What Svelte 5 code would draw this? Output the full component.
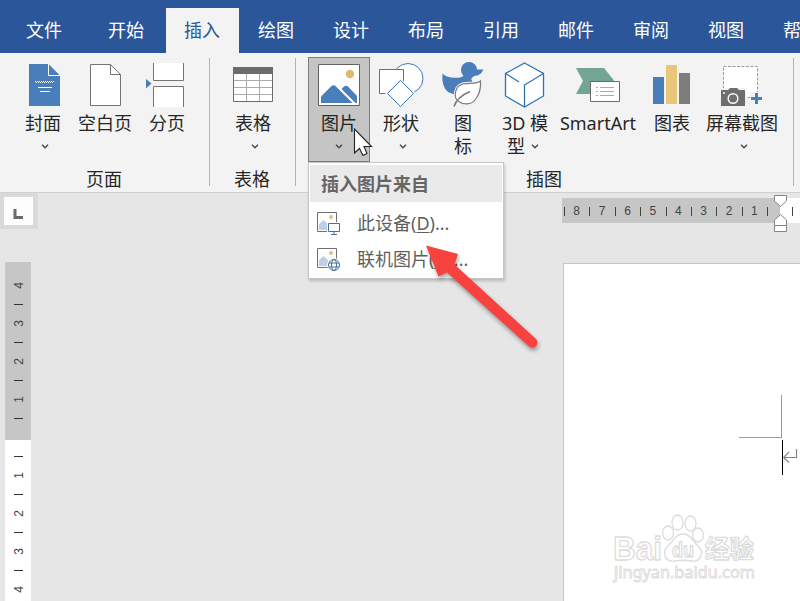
<script lang="ts">
  type Command = {
    icon: string;
    lines: string[];
    width: number;
    chevron?: boolean;
    open?: boolean;
  };
  type Group = { label: string; width: number; commands: Command[] };

  const tabs = ['文件', '开始', '插入', '绘图', '设计', '布局', '引用', '邮件', '审阅', '视图', '帮助'];
  let active = $state('插入');
  let menuOpen = $state(true);

  const groups: Group[] = [
    {
      label: '页面',
      width: 210,
      commands: [
        { icon: 'cover', lines: ['封面', ''], width: 62, chevron: true },
        { icon: 'blank', lines: ['空白页'], width: 62 },
        { icon: 'break', lines: ['分页'], width: 62 },
      ],
    },
    {
      label: '表格',
      width: 86,
      commands: [{ icon: 'table', lines: ['表格', ''], width: 62, chevron: true }],
    },
    {
      label: '插图',
      width: 498,
      commands: [
        { icon: 'picture', lines: ['图片', ''], width: 62, chevron: true, open: true },
        { icon: 'shapes', lines: ['形状', ''], width: 62, chevron: true },
        { icon: 'icons', lines: ['图', '标'], width: 62 },
        { icon: 'cube', lines: ['3D 模', '型'], width: 62, chevron: true },
        { icon: 'smartart', lines: ['SmartArt'], width: 84 },
        { icon: 'chart', lines: ['图表'], width: 64 },
        { icon: 'screenshot', lines: ['屏幕截图', ''], width: 76, chevron: true },
      ],
    },
  ];

  const sources = [
    { icon: 'device', text: '此设备', key: 'D' },
    { icon: 'online', text: '联机图片', key: 'O' },
  ];

  const hMarks = [8, 7, 6, 5, 4, 3, 2, 1];
  const vMargin = [4, 3, 2, 1];
  const vBody = [1, 2, 3, 4];
</script>

{#snippet commandIcon(name: string)}
  <svg class="icon" width="60" height="54" viewBox="0 0 60 54" fill="none">
    {#if name === 'cover'}
      <path d="M16 6H35.500L47 17.500V48H16Z" fill="#4a7ebb" />
      <path d="M35.500 6V17.500H47" stroke="#fff" />
      <path d="M22 23.500H41" stroke="#fff" stroke-dasharray="1 1" />
      <path d="M23 24.500H41" stroke="#fff" stroke-dasharray="1 1" />
      <path d="M25 29.500H39M27 33.500H37" stroke="#fff" />
    {:else if name === 'blank'}
      <path d="M15.500 6.500H35.500L45.500 16.500V47.500H15.500Z" fill="#fff" stroke="#747474" />
      <path d="M35.500 6.500V16.500H45.500" stroke="#747474" />
    {:else if name === 'break'}
      <path d="M16.500 5V22.500H46.500V5" fill="#fff" stroke="#747474" />
      <path d="M16.500 49V28.500H46.500V49" fill="#fff" stroke="#747474" />
      <path d="M9 21L14.500 25.500L9 30.500Z" fill="#4a7ebb" />
    {:else if name === 'table'}
      <path d="M10.500 9.500H49.500V43.500H10.500Z" fill="#fff" />
      <path d="M23.500 16V43M36.500 16V43M11 22.500H49M11 29.500H49M11 36.500H49" stroke="#ababab" />
      <path d="M10.500 9.500H49.500V43.500H10.500Z" stroke="#6b6b6b" />
      <path d="M10 9H50V16H10Z" fill="#6b6b6b" />
    {:else if name === 'picture'}
      <path d="M9.500 6.500H50.500V47.500H9.500Z" fill="#fff" stroke="#626262" />
      <circle cx="41" cy="16" r="4.200" fill="#e0b870" />
      <path d="M12 45V38.500L22.500 28Q24.500 26.500 26.500 28L43.500 45Z" fill="#4a7ebb" />
      <path d="M32.500 31L35 28.500Q37 27 39 28.500L48 38V45H46.500Z" fill="#4a7ebb" />
    {:else if name === 'shapes'}
      <circle cx="37" cy="20.500" r="15" fill="#fff" stroke="#4278b0" />
      <path d="M8.500 11.500H32.500V35.500H8.500Z" fill="#fff" stroke="#4278b0" />
      <path d="M29.500 20L45 35.500L29.500 51L14 35.500Z" fill="#f3f3f3" />
      <path d="M29.500 22.500L42.500 35.500L29.500 48.500L16.500 35.500Z" fill="#fff" stroke="#4278b0" />
    {:else if name === 'icons'}
      <circle cx="36" cy="12" r="8" fill="#4a7ebb" />
      <path
        d="M42 11.500H50.500Q48 17.500 41 18Q37 20 39 23Q42 33 33 36Q22 38 15 34Q8 28 9.500 15.500Q15 21 27 19.500Q32 18 31 15Z"
        fill="#4a7ebb"
      />
      <path
        d="M47.500 23C42 28 29 22 24 30C21 36 22 41 25 43C30 47 38 47 42 42C47 36 48 30 47.500 23Z"
        fill="#fff"
        stroke="#f3f3f3"
        stroke-width="3"
      />
      <path
        d="M47.500 23C42 28 29 22 24 30C21 36 22 41 25 43C30 47 38 47 42 42C47 36 48 30 47.500 23Z"
        fill="#fff"
        stroke="#7b7b7b"
        stroke-width="1.200"
      />
      <path d="M21 48.500Q24 39 37 33.500" stroke="#7b7b7b" stroke-width="1.600" />
    {:else if name === 'cube'}
      <path
        d="M29.500 5L48.500 15.500V38L29.500 49L10.500 38V15.500Z"
        fill="#fff"
        stroke="#2e75b6"
        stroke-width="1.300"
      />
      <path d="M10.500 15.500L24 24M48.500 15.500L29.500 27V49" stroke="#2e75b6" stroke-width="1.300" />
    {:else if name === 'smartart'}
      <path d="M8 10H36L46 22.500L36 36H8L15 23Z" fill="#72a594" />
      <path d="M22.500 23.500H51.500V43.500H22.500Z" fill="#fff" stroke="#6b6b6b" />
      <path d="M28 29.500H30M28 33.500H30M28 37.500H30M32 29.500H46M32 33.500H46M32 37.500H46" stroke="#ababab" />
    {:else if name === 'chart'}
      <path d="M11 19H22V46H11Z" fill="#4a7ebb" />
      <path d="M24 7H35V46H24Z" fill="#e8c67a" />
      <path d="M37 15H48V46H37Z" fill="#7d7d7d" />
    {:else if name === 'screenshot'}
      <path d="M11.500 8.500H45.500V39.500H11.500Z" fill="#fff" stroke="#9a9a9a" stroke-dasharray="3 1.500" />
      <path d="M8 30H34V49H8ZM38 34H52V48H38Z" fill="#f3f3f3" />
      <path d="M9 33Q9 32 10 32H16L18 30H25L27 32H32Q33 32 33 33V48H9Z" fill="#6e6e6e" />
      <circle cx="21" cy="40.500" r="4.800" stroke="#fff" stroke-width="1.500" />
      <path d="M11 35H13" stroke="#fff" stroke-width="1.500" />
      <path d="M39 40.500H50M44.500 35V46" stroke="#4a7ebb" stroke-width="3" />
    {/if}
  </svg>
{/snippet}

<div class="window">
  <nav class="tabs">
    {#each tabs as tab, i}
      <button class="tab" class:file={i === 0} class:active={tab === active} onclick={() => (active = tab)}>
        {tab}
      </button>
    {/each}
  </nav>

  <div class="ribbon">
    {#each groups as group}
      <section class="group" style:width="{group.width}px">
        <div class="commands">
          {#each group.commands as cmd}
            <div class="slot">
              <button
                class="command"
                class:open={cmd.open && menuOpen}
                style:width="{cmd.width}px"
                onclick={() => cmd.open && (menuOpen = !menuOpen)}
              >
                {@render commandIcon(cmd.icon)}
                {#each cmd.lines as line, i}
                  <span class="line">
                    {line}
                    {#if cmd.chevron && i === cmd.lines.length - 1}
                      <svg class="chevron" class:inline={line} width="8" height="5" viewBox="0 0 8 5">
                        <path d="M1 0.800L4 3.800L7 0.800" fill="none" stroke="#444" stroke-width="1.300" />
                      </svg>
                    {/if}
                  </span>
                {/each}
              </button>

              {#if cmd.open && menuOpen}
                <div class="menu">
                  <div class="menu-title">插入图片来自</div>
                  {#each sources as source}
                    <div class="menu-item">
                      <svg width="25" height="25" viewBox="0 0 25 25" fill="none">
                        <path d="M1.500 1.500H20.500V20.500H1.500Z" fill="#fff" stroke="#6e6e6e" />
                        <path d="M3 19V13L7.500 9L12 13V19Z" fill="#bfd0e4" />
                        <circle cx="15" cy="6" r="2" fill="#e3bf7e" />
                        {#if source.icon === 'device'}
                          <path d="M11 11H25V25H11Z" fill="#fff" />
                          <path d="M12.500 12.500H23.500V20.500H12.500ZM18 20.500V23M15 23.500H21" stroke="#41719c" />
                        {:else}
                          <circle cx="18" cy="18" r="7" fill="#fff" />
                          <circle cx="18" cy="18" r="5.500" stroke="#41719c" />
                          <ellipse cx="18" cy="18" rx="2.500" ry="5.500" stroke="#41719c" />
                          <path d="M13 16H23M13 20H23" stroke="#41719c" />
                        {/if}
                      </svg>
                      <span>{source.text}(<u>{source.key}</u>)...</span>
                    </div>
                  {/each}
                </div>
              {/if}
            </div>
          {/each}
        </div>
        <div class="group-label">{group.label}</div>
      </section>
    {/each}
  </div>

  <div class="workspace">
    <aside class="side">
      <div class="tab-stop">
        <svg width="29" height="28" viewBox="0 0 29 28">
          <path d="M11 12V20.500H19" fill="none" stroke="#6a6a6a" stroke-width="3" />
        </svg>
      </div>
      <div class="v-ruler">
        <div class="v-margin">
          {#each vMargin as n}
            <span class="v-num">{n}</span>
            <i class="v-tick"></i>
          {/each}
        </div>
        <div class="v-body">
          {#each vBody as n}
            <i class="v-tick"></i>
            <span class="v-num">{n}</span>
          {/each}
        </div>
      </div>
    </aside>

    <main class="canvas">
      <div class="h-ruler">
        <div class="h-margin">
          {#each hMarks as n}
            <span class="h-cell">{n}</span>
          {/each}
          <span class="h-cell"></span>
        </div>
        <div class="h-body"><span class="h-cell"></span></div>
        <svg class="indent" width="14" height="38" viewBox="0 0 14 38">
          <path
            d="M0.500 0.500H12.500V6L6.500 11.500L0.500 6ZM6.500 19.500L12.500 25V36.500H0.500V25ZM0.500 30.500H12.500"
            fill="#fff"
            stroke="#858585"
          />
        </svg>
      </div>
      <div class="page">
        <div class="corner"></div>
        <div class="paragraph">
          <i class="caret"></i>
          <svg width="15" height="14" viewBox="0 0 15 14" fill="none" stroke="#858585">
            <path d="M13.500 0V8.500H1M6 3L0.500 8.500L6 13.500" stroke-width="1.200" />
          </svg>
        </div>
      </div>
    </main>
  </div>

  <svg class="pointer" width="20" height="30" viewBox="0 0 20 30">
    <path
      d="M1.500 1V25L6.500 20.500L10 27.500L14 25.500L11 18.500H18.500Z"
      fill="#fff"
      stroke="#222"
      stroke-width="1.100"
    />
  </svg>

  <svg class="arrow" width="130" height="120" viewBox="0 0 130 120">
    <path
      d="M6 5.500L38 14L34.500 24.500L115.500 98.500A5 5 0 0 1 109 106.500L27 32.500L18.500 36.500Z"
      fill="#f8423f"
    />
  </svg>

  <svg class="watermark" width="150" height="72" viewBox="0 0 150 72">
    <g fill="#fff" stroke="#dcdcdc" stroke-width="1.300" stroke-linejoin="round">
      <text x="3" y="47.500" font-size="34" font-weight="700" textLength="49" lengthAdjust="spacingAndGlyphs">Bai</text>
      <path d="M57 35C63 30 65 22 73 22C81 22 83 30 89 35C94 41 91 50 82 49C76 48 70 48 64 49C55 50 52 41 57 35Z" />
      <ellipse cx="58" cy="21" rx="5.500" ry="7" />
      <ellipse cx="67.500" cy="10.500" rx="5.500" ry="7.500" />
      <ellipse cx="80.500" cy="11.500" rx="5.500" ry="7.500" />
      <ellipse cx="88" cy="23" rx="5.500" ry="7" />
      <text x="62" y="45" font-size="21" font-weight="700" textLength="22" lengthAdjust="spacingAndGlyphs">du</text>
      <text x="95" y="46" font-size="25" font-weight="700" textLength="49" lengthAdjust="spacingAndGlyphs">经验</text>
    </g>
    <text
      class="site"
      x="4"
      y="66"
      font-size="16"
      fill="#fff"
      stroke="#dcdcdc"
      stroke-width="0.900"
      textLength="141"
      lengthAdjust="spacingAndGlyphs">jingyan.baidu.com</text
    >
  </svg>
</div>

<style>
  .window {
    position: relative;
    display: flex;
    flex-direction: column;
    width: 800px;
    height: 601px;
    overflow: hidden;
    background: #e6e6e6;
    color: #262626;
    font-family: 'Noto Sans', 'Noto Sans CJK SC', sans-serif;
    font-size: 18px;
  }
  button {
    box-sizing: border-box;
    border: 0;
    padding: 0;
    background: none;
    color: inherit;
    font: inherit;
  }
  .tabs {
    display: flex;
    flex: none;
    align-items: flex-end;
    height: 53px;
    background: #2b579a;
    color: #fff;
  }
  .tab {
    flex: none;
    width: 73px;
    height: 45px;
    margin: 0 1px;
    padding: 0 1px 2px 0;
    line-height: 42px;
  }
  .tab.file {
    width: 87px;
  }
  .tab.active {
    margin: 0 0 0 2px;
    background: #f3f3f3;
    color: #2b579a;
  }
  .ribbon {
    display: flex;
    flex: none;
    box-sizing: border-box;
    height: 140px;
    padding-top: 4px;
    border-bottom: 1px solid #d0d0d0;
    background: #f3f3f3;
  }
  .group {
    position: relative;
    flex: none;
    display: flex;
    flex-direction: column;
  }
  .group::after {
    content: '';
    position: absolute;
    top: 1px;
    right: 0;
    width: 1px;
    height: 128px;
    background: #b4b4b4;
  }
  .commands {
    display: flex;
    height: 105px;
    padding-left: 12px;
  }
  .slot {
    position: relative;
  }
  .command {
    display: flex;
    flex-direction: column;
    align-items: center;
    height: 105px;
    border: 1px solid transparent;
  }
  .command.open {
    background: #c5c5c5;
    border-color: #7e7e7e;
  }
  .icon {
    flex: none;
    display: block;
  }
  .line {
    display: flex;
    align-items: center;
    justify-content: center;
    height: 23px;
    line-height: 23px;
    white-space: nowrap;
  }
  .chevron {
    margin-left: 3px;
  }
  .open .chevron {
    margin-left: 0;
  }
  .chevron.inline {
    margin: 0 4px 0 6px;
  }
  .group-label {
    padding-right: 2px;
    line-height: 34px;
    text-align: center;
  }
  .menu {
    position: absolute;
    z-index: 2;
    top: 105px;
    left: 0;
    box-sizing: border-box;
    width: 196px;
    height: 117px;
    padding: 2px 1px 0;
    border: 1px solid #c6c6c6;
    background: #fff;
    box-shadow: 1px 2px 3px rgba(0, 0, 0, 0.2);
    color: #5f5f5f;
  }
  .menu-title {
    height: 37px;
    margin-bottom: 3px;
    padding-left: 11px;
    background: #eaeaea;
    color: #666;
    font-weight: 700;
    line-height: 38px;
  }
  .menu-item {
    display: flex;
    align-items: center;
    gap: 16px;
    height: 36px;
    padding-left: 6px;
    line-height: 36px;
    white-space: nowrap;
  }
  .menu-item u {
    text-decoration-thickness: 1px;
    text-underline-offset: 2px;
  }
  .workspace {
    display: flex;
    flex: 1;
    min-height: 0;
  }
  .side {
    width: 562px;
    flex: none;
  }
  .tab-stop {
    width: 29px;
    height: 28px;
    border: 4px solid #dadada;
    border-right-width: 5px;
    background: #fdfdfd;
  }
  .v-ruler {
    width: 26px;
    margin: 33px 0 0 5px;
    color: #444;
    font-family: 'Liberation Sans', sans-serif;
    font-size: 12px;
  }
  .v-margin,
  .v-body {
    display: flex;
    flex-direction: column;
    align-items: center;
    box-sizing: border-box;
  }
  .v-margin {
    height: 178px;
    padding-top: 14px;
    background: #c6c6c6;
  }
  .v-body {
    height: 161px;
    padding-top: 7px;
    background: #fff;
  }
  .v-num,
  .v-tick {
    flex: none;
    display: flex;
    align-items: center;
    justify-content: center;
    width: 19px;
    height: 19px;
  }
  .v-num {
    transform: rotate(-90deg);
  }
  .v-tick::before {
    content: '';
    width: 9px;
    height: 1px;
    background: #333;
  }
  .canvas {
    display: flex;
    flex-direction: column;
    width: 238px;
  }
  .h-ruler {
    position: relative;
    flex: none;
    display: flex;
    height: 25px;
    margin-top: 5px;
    color: #444;
    font-family: 'Liberation Sans', sans-serif;
    font-size: 12px;
  }
  .h-margin,
  .h-body {
    display: flex;
    align-items: center;
    box-sizing: border-box;
    overflow: hidden;
  }
  .h-margin {
    width: 218px;
    padding: 1px 0 0 2px;
    background: #c6c6c6;
  }
  .h-body {
    flex: 1;
    padding: 1px 0 0 12px;
    background: #fff;
  }
  .h-cell {
    flex: none;
    box-sizing: border-box;
    width: 25.4px;
    height: 9px;
    border-left: 1px solid #444;
    padding-right: 1px;
    line-height: 9px;
    text-align: center;
  }
  .indent {
    position: absolute;
    top: -3px;
    left: 212px;
  }
  .page {
    flex: 1;
    margin: 40px 0 0 1px;
    border: 1px solid #c6c6c6;
    border-width: 1px 0 0 1px;
    background: #fff;
  }
  .corner {
    box-sizing: border-box;
    width: 43px;
    height: 43px;
    margin: 131px 0 0 175px;
    border: 1px solid #9b9b9b;
    border-width: 0 1px 1px 0;
  }
  .paragraph {
    display: flex;
    align-items: center;
    height: 35px;
    margin: 2px 0 0 218px;
  }
  .caret {
    flex: none;
    width: 1px;
    height: 35px;
    background: #000;
  }
  .paragraph svg {
    flex: none;
    margin-bottom: 4px;
  }
  .pointer {
    position: absolute;
    z-index: 3;
    top: 128px;
    left: 353px;
  }
  .arrow {
    position: absolute;
    z-index: 3;
    top: 240px;
    left: 420px;
    filter: drop-shadow(1px 3px 2px rgba(0, 0, 0, 0.35));
  }
  .watermark {
    position: absolute;
    top: 512px;
    left: 610px;
    font-family: 'Liberation Sans', 'Noto Sans CJK SC', sans-serif;
  }
  .site {
    font-family: 'Noto Sans', sans-serif;
  }
</style>
